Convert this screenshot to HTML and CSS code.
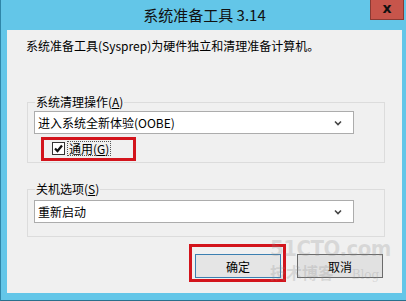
FILE: index.html
```html
<!DOCTYPE html>
<html lang="zh-CN">
<head>
  <meta charset="UTF-8" />
  <title>系统准备工具 3.14</title>
  <link rel="stylesheet" href="styles.css">
</head>
<body>
  <div class="window">
    <div class="titlebar">
      <div></div>
      <div class="title">系统准备工具 3.14</div>
      <div class="close">x</div>
    </div>

    <div class="client">
      <div class="intro">系统准备工具(Sysprep)为硬件独立和清理准备计算机。</div>

      <fieldset class="group first">
        <legend>系统清理操作(<u>A</u>)</legend>
        <div class="combo">
          <span>进入系统全新体验(OOBE)</span>
          <svg class="arrow" width="8" height="6" viewBox="0 0 8 6"><path d="M1 1.5 L4 4.5 L7 1.5" fill="none" stroke="#444" stroke-width="1.6"/></svg>
        </div>
        <div class="check-row">
          <span class="checkbox">
            <svg width="11" height="11" viewBox="0 0 11 11"><path d="M2 5.5 L4.5 8 L9 2.5" fill="none" stroke="#111" stroke-width="2.2"/></svg>
          </span>
          <span class="check-label">通用(<u>G</u>)</span>
          <div class="mark mark-check"></div>
        </div>
      </fieldset>

      <fieldset class="group second">
        <legend>关机选项(<u>S</u>)</legend>
        <div class="combo">
          <span>重新启动</span>
          <svg class="arrow" width="8" height="6" viewBox="0 0 8 6"><path d="M1 1.5 L4 4.5 L7 1.5" fill="none" stroke="#444" stroke-width="1.6"/></svg>
        </div>
      </fieldset>

      <div class="buttons">
        <button class="btn default">确定<span class="mark mark-ok"></span></button>
        <button class="btn">取消</button>
      </div>

      <div class="watermark">
        <div class="wm-big">51CTO.com</div>
        <div class="wm-small">技术博客 <span class="wm-blog">Blog</span></div>
      </div>
    </div>
  </div>
</body>
</html>
```

FILE: styles.css
```css
body { margin: 0; font-family: "Noto Sans CJK SC", "Noto Sans", sans-serif; font-size: 12px; color: #000; }
.window {
  width: 406px; height: 301px; box-sizing: border-box;
  background-color: #63c6e8;
  border-left: 1px solid #2f86a8; border-bottom: 1px solid #2a6f8c;
  display: flex; flex-direction: column;
}
.titlebar {
  height: 30px; flex: none;
  display: grid; grid-template-columns: 1fr auto 1fr; align-items: start;
}
.title { font-size: 15px; line-height: 30px; color: #111; padding-left: 2px; }
.close {
  justify-self: end; margin-right: 2px;
  width: 32px; height: 19px; line-height: 16px;
  background-color: #c7554b; border: 1px solid #8a3a33; border-top: none;
  text-align: center; font-family: "DejaVu Sans", sans-serif; font-weight: bold; font-size: 14px; color: #111;
}
.client {
  flex: 1; position: relative;
  margin: 0 4px 7px 6px; padding: 8px 0 0 0;
  background-color: #f0f0f0;
}
.intro { line-height: 16px; padding-left: 19px; }

.group {
  margin: 0 17px 0 20px; padding: 0 0 0 6px;
  border: 1px solid #dcdcdc; min-inline-size: 0;
}
.group legend { line-height: 16px; padding: 0 1px; margin-left: 1px; }
.group.first { margin-top: 40px; padding-bottom: 6px; }
.group.second { margin-top: 18px; padding-bottom: 13px; }
.group.second .combo { margin-top: 3px; }

.combo {
  width: 320px; height: 23px; box-sizing: border-box; margin-top: 1px;
  background-color: #fff; border: 1px solid #acacac;
  display: flex; align-items: center; justify-content: space-between;
  padding: 0 11px 0 3px; font-size: 12px;
}
.arrow { display: block; }

.check-row {
  position: relative;
  display: flex; align-items: center; gap: 2px;
  margin-top: 6px; padding-left: 18px; height: 16px;
}
.checkbox {
  width: 11px; height: 11px; background-color: #fff; border: 1px solid #333;
  display: flex; align-items: center; justify-content: center;
}
.check-label { border: 1px dotted #555; padding: 0 1px; line-height: 13px; }

.mark { position: absolute; border: 3px solid #d3141c; box-sizing: border-box; }
.mark-check { left: 7px; top: -3px; width: 95px; height: 24px; }

.buttons {
  display: flex; justify-content: flex-end; gap: 16px;
  margin: 17px 19px 0 0;
}
.btn {
  position: relative;
  width: 86px; height: 24px; box-sizing: border-box;
  background-color: #e1e1e1; border: 1px solid #6b6b6b;
  font-family: inherit; font-size: 12px; color: #000; padding: 0;
}
.btn.default { border-color: #3c7fb1; background-color: #e5e5e5; }
.mark-ok { left: -7px; top: -11px; width: 97px; height: 38px; }

.watermark {
  position: absolute; left: 263px; top: 206px; color: rgba(140, 140, 140, 0.25);
  font-family: "DejaVu Sans Condensed", "DejaVu Sans", sans-serif; font-weight: bold;
  pointer-events: none;
}
.wm-big { font-size: 22px; line-height: 26px; letter-spacing: -0.5px; }
.wm-small { font-family: "Noto Sans CJK SC", sans-serif; font-size: 16px; line-height: 20px; }
.wm-blog { font-family: "DejaVu Serif", serif; font-size: 12px; font-weight: normal; margin-left: 14px; }
```
